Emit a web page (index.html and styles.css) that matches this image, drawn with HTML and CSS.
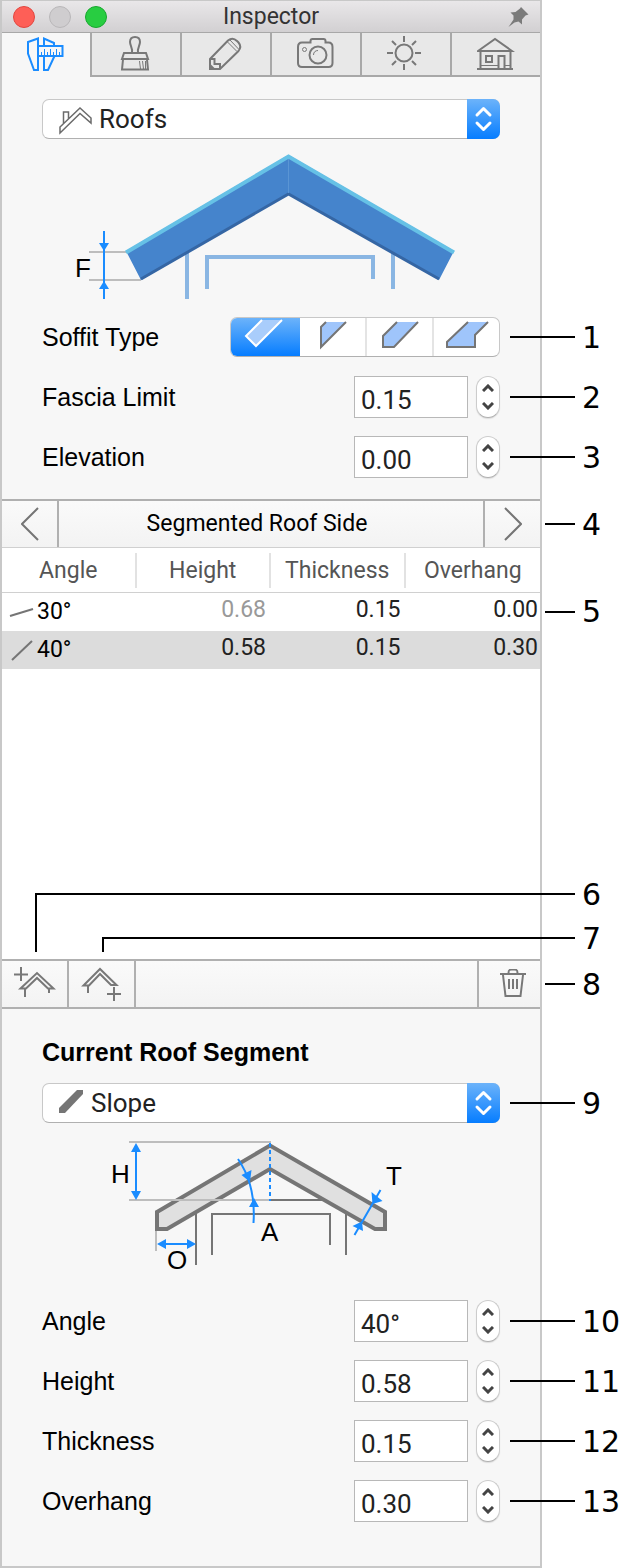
FILE: index.html
```html
<!DOCTYPE html>
<html lang="en">
<head>
  <meta charset="UTF-8">
  <meta name="viewport" content="width=device-width, initial-scale=1.0">
  <title>Inspector</title>
  <link rel="stylesheet" href="styles.css">
</head>
<body>
  <main class="inspector">
    <header class="titlebar">
      <div class="lights">
        <button class="light close" aria-label="Close"></button>
        <button class="light minimize" aria-label="Minimize"></button>
        <button class="light zoom" aria-label="Zoom"></button>
      </div>
      <h1>Inspector</h1>
      <button class="pin" aria-label="Pin">
        <svg width="22" height="22" viewBox="0 0 22 22"><path d="M14 1l7.500 7.500-3 1-3.500 4 0 5-3.500-3-4 1-6 4.500 5-7.500 0-4-3-3 5-.5 4.500-3.500z" fill="#7b7b7b"/></svg>
      </button>
    </header>

    <nav class="tabs">
      <button class="tab active" aria-label="Object properties">
        <svg width="38" height="38" viewBox="27 36 38 38">
          <path d="M38 38.500L28 42v11.500l6 16.500h4zM44 46v-7.500l10 4.500v3M54.500 56L48 70h-4V56M38 46h24.500v10H38"/>
          <path d="M41.500 52v4M44.500 49v7M47.500 52v4M50.500 49v7M53.500 52v4M56.500 49v7M59.500 52v4" stroke-width="1"/>
        </svg>
      </button>
      <button class="tab" aria-label="Materials">
        <svg width="38" height="38" viewBox="117 36 38 38">
          <path d="M132 53.500c1-4-2-7-2-10.500 0-3 2-5 5-5s5 2 5 5c0 3.500-3 6.500-2 10.500M124 54h22l2 6h-26zM123 60.500L122 70.500h26l-1-10"/>
          <path d="M139.500 62l1 8M142.500 62l1 8M145.500 62v8" stroke-width="1"/>
        </svg>
      </button>
      <button class="tab" aria-label="Edit">
        <svg width="38" height="38" viewBox="207 36 38 38">
          <path d="M210 60l18-18.500c3-2.500 6.500-2 9 .5l1.500 1.500c2.500 3 2 6 0 8.500L220 70h-10zM210 60h4.500v5h5.500v5"/>
          <path d="M227.500 43l9.500 9.500M230 41l9 9.500" stroke-width="1"/>
          <path d="M210 66l4 4h-4z" fill="#787878"/>
        </svg>
      </button>
      <button class="tab" aria-label="Camera">
        <svg width="38" height="38" viewBox="297 36 38 38">
          <path d="M302 43.500h8.500V42c0-1.500 1-2 2-2h11c1.500 0 2 .5 2 2v1.500h3c3 0 4 2 4 4.500v16c0 2.500-1.500 4-4 4h-26.500c-2.500 0-4-1.500-4-4V48c0-2.500 1.500-4.500 4-4.500z"/>
          <circle cx="318" cy="56" r="8.500"/>
          <circle cx="304.500" cy="50.500" r="2" stroke-width="1"/>
          <path d="M313.500 56c0-3 2-4.500 4.500-4.500" stroke-width="1"/>
        </svg>
      </button>
      <button class="tab" aria-label="Lighting">
        <svg width="38" height="38" viewBox="387 36 38 38">
          <circle cx="404" cy="54" r="8.500"/>
          <path d="M404 37v6M404 65v6M387 54h6M415 54h6M392 42l4 4M412 62l4 4M416 42l-4 4M396 62l-4 4"/>
        </svg>
      </button>
      <button class="tab" aria-label="Project">
        <svg width="38" height="38" viewBox="477 36 38 38">
          <path d="M478 52l17-12 17 12zM480.500 53v17M510.500 53v17M477 70h36M486 57h6v6h-6zM498.500 70V57h6v13"/>
          <path d="M481 66.500h17M505 66.500h5" stroke-width="1"/>
        </svg>
      </button>
    </nav>

    <section class="group">
      <div class="popup">
        <svg class="popup-icon" width="34" height="30" viewBox="58 106 34 30" fill="none" stroke="#6b6b6b" stroke-width="1.500">
          <path d="M60 134v-6l20-19 11 10v5l-11-9.500zM63.500 125v-12h5v7"/>
        </svg>
        <select class="roofs" aria-label="Object type"><option>Roofs</option></select>
        <svg class="arrows" width="33" height="40" viewBox="0 0 33 40"><path d="M10 16l6.500-6.500L23 16M10 24l6.500 6.500L23 24"/></svg>
      </div>

      <svg class="diagram" viewBox="42 139 458 168">
        <path d="M187 253v46M207 289v-32h166V279M393 253v36" fill="none" stroke="#8ab6e3" stroke-width="4"/>
        <path d="M89 252h38M89 280h52" stroke="#bdbdbd" stroke-width="2"/>
        <path d="M126 251L288.500 155 454 251l-15 29-150.500-86L141 280z" fill="#4584cc"/>
        <path d="M126 252.500L288.500 156.500 454 252.500" fill="none" stroke="#66c1e6" stroke-width="4"/>
        <path d="M141 279L288.500 194 439 279" fill="none" stroke="#3566a4" stroke-width="3"/>
        <path d="M288.500 159v34" stroke="#5a95d4"/>
        <path d="M104 231v68" stroke="#1a8cff" stroke-width="2"/>
        <path d="M99 243h10l-5 8zM99 289h10l-5-8z" fill="#1a8cff"/>
        <text x="75" y="277">F</text>
      </svg>

      <div class="row">
        <span class="label">Soffit Type</span>
        <div class="segmented">
          <label><input type="radio" name="soffit" aria-label="Perpendicular" checked>
            <svg width="44" height="34" viewBox="243 317 44 34"><path d="M261 319l-16 16 10 10 26-26z" fill="#a9cdfb"/><path d="M261 319l-16 16 10 10 26-26" fill="none" stroke="#fff" stroke-width="2"/></svg></label>
          <label><input type="radio" name="soffit" aria-label="Vertical">
            <svg width="44" height="34" viewBox="312 317 44 34"><path d="M327 321l-5 5v20l25-25z" fill="#9fc5fb"/><path d="M327 321l-5 5v20l25-25" fill="none" stroke="#757575" stroke-width="2"/></svg></label>
          <label><input type="radio" name="soffit" aria-label="Horizontal">
            <svg width="44" height="34" viewBox="379 317 44 34"><path d="M398 321l-14 14v11h11l24-25z" fill="#9fc5fb"/><path d="M398 321l-14 14v11h11l24-25" fill="none" stroke="#757575" stroke-width="2"/></svg></label>
          <label><input type="radio" name="soffit" aria-label="Boxed">
            <svg width="44" height="34" viewBox="446 317 44 34"><path d="M469 321l-21 20v5h28v-12l13-13z" fill="#9fc5fb"/><path d="M469 321l-21 20v5h28v-12l13-13" fill="none" stroke="#757575" stroke-width="2"/></svg></label>
        </div>
        <span class="callout">1</span>
      </div>
      <div class="row">
        <label class="label" for="fascia">Fascia Limit</label>
        <input type="text" id="fascia" value="0.15">
        <div class="stepper">
          <button aria-label="Increase"><svg width="12" height="8" viewBox="0 0 12 8"><path d="M1 7l5-5 5 5"/></svg></button>
          <button aria-label="Decrease"><svg width="12" height="8" viewBox="0 0 12 8"><path d="M1 1l5 5 5-5"/></svg></button>
        </div>
        <span class="callout">2</span>
      </div>
      <div class="row">
        <label class="label" for="elevation">Elevation</label>
        <input type="text" id="elevation" value="0.00">
        <div class="stepper">
          <button aria-label="Increase"><svg width="12" height="8" viewBox="0 0 12 8"><path d="M1 7l5-5 5 5"/></svg></button>
          <button aria-label="Decrease"><svg width="12" height="8" viewBox="0 0 12 8"><path d="M1 1l5 5 5-5"/></svg></button>
        </div>
        <span class="callout">3</span>
      </div>
    </section>

    <div class="side-nav">
      <button aria-label="Previous side"><svg width="18" height="34" viewBox="0 0 18 34"><path d="M17 1L1 17l16 16"/></svg></button>
      <h2>Segmented Roof Side</h2>
      <button aria-label="Next side"><svg width="18" height="34" viewBox="0 0 18 34"><path d="M1 1l16 16L1 33"/></svg></button>
      <span class="callout short">4</span>
    </div>

    <div class="segments">
      <table>
        <thead>
          <tr><th><span>Angle</span></th><th><span>Height</span></th><th><span>Thickness</span></th><th><span>Overhang</span></th></tr>
        </thead>
        <tbody>
          <tr>
            <td class="angle"><svg width="26" height="22" viewBox="0 0 26 22"><path d="M1 15l23-7"/></svg>30°</td>
            <td class="dim">0.68</td>
            <td>0.15</td>
            <td>0.00<span class="callout short">5</span></td>
          </tr>
          <tr class="selected">
            <td class="angle"><svg width="26" height="22" viewBox="0 0 26 22"><path d="M3 21L23 2"/></svg>40°</td>
            <td>0.58</td>
            <td>0.15</td>
            <td>0.30</td>
          </tr>
        </tbody>
      </table>
      <span class="lead lead-upper">6</span>
      <span class="lead lead-lower">7</span>
    </div>

    <div class="toolbar">
      <button aria-label="Add segment above">
        <svg width="42" height="34" viewBox="14 967 42 34"><path d="M14 974.500h14M21 967v14M20.500 988.500L37 973l16.500 15.500h-5.500L37 978l-11 10.500zM25 989v8M49 989v4"/></svg>
      </button>
      <button aria-label="Add segment below">
        <svg width="42" height="34" viewBox="82 969 42 34"><path d="M84.500 987.500L101 971l16.500 16h-5.500L101 976l-11 11.500zM89 988v7M108 996h14M115 989v14"/></svg>
      </button>
      <button class="delete" aria-label="Delete segment">
        <svg width="32" height="30" viewBox="493 969 32 30"><path d="M499 974h26M507.500 973c0-3 1-3.500 3-3.500h3c2 0 3 .5 3 3.500M502 975l2.500 21h15l2.500-21M508 979v10M512 979v10M516 979v10"/></svg>
      </button>
      <span class="callout short">8</span>
    </div>

    <section class="group current">
      <h2>Current Roof Segment</h2>
      <div class="popup">
        <svg class="popup-icon" width="26" height="30" viewBox="58 1090 26 30"><path d="M59 1109l18-18h6v4l-18 19h-6z" fill="#757575"/></svg>
        <select class="slope" aria-label="Segment type"><option>Slope</option></select>
        <svg class="arrows" width="33" height="40" viewBox="0 0 33 40"><path d="M10 16l6.500-6.500L23 16M10 24l6.500 6.500L23 24"/></svg>
        <span class="callout">9</span>
      </div>

      <svg class="diagram" viewBox="42 1123 458 168">
        <path d="M196 1213v52M212 1255v-41h118v31M346 1213v42M270 1200h54" fill="none" stroke="#757575" stroke-width="2"/>
        <path d="M157 1212L270 1145.500 385 1212v17h-10L270 1169l-103 60h-10z" fill="#e0e0e0" stroke="#757575" stroke-width="4"/>
        <path d="M129 1142h142M129 1200h141M156 1231v20" stroke="#bdbdbd" stroke-width="2"/>
        <path d="M136 1146v50M160 1244h32M380.500 1190l-26 45M238 1159q18 26 15.500 64" fill="none" stroke="#1a8cff" stroke-width="2"/>
        <path d="M270 1143v58" stroke="#1a8cff" stroke-width="2" stroke-dasharray="4 3"/>
        <path d="M131 1152h10l-5-9zM131 1191h10l-5 9zM166 1239v10l-9-5zM187 1239v10l9-5zM241.500 1175l10-5-1.500 12zM249 1207h10l-5-9zM371.500 1192l11 9-10 3zM352.500 1226l9.500-4.500 1 9.500z" fill="#1a8cff"/>
        <text x="111" y="1183">H</text>
        <text x="386" y="1185">T</text>
        <text x="261" y="1241">A</text>
        <text x="167" y="1269">O</text>
      </svg>

      <div class="row">
        <label class="label" for="angle">Angle</label>
        <input type="text" id="angle" value="40°">
        <div class="stepper">
          <button aria-label="Increase"><svg width="12" height="8" viewBox="0 0 12 8"><path d="M1 7l5-5 5 5"/></svg></button>
          <button aria-label="Decrease"><svg width="12" height="8" viewBox="0 0 12 8"><path d="M1 1l5 5 5-5"/></svg></button>
        </div>
        <span class="callout">10</span>
      </div>
      <div class="row">
        <label class="label" for="height">Height</label>
        <input type="text" id="height" value="0.58">
        <div class="stepper">
          <button aria-label="Increase"><svg width="12" height="8" viewBox="0 0 12 8"><path d="M1 7l5-5 5 5"/></svg></button>
          <button aria-label="Decrease"><svg width="12" height="8" viewBox="0 0 12 8"><path d="M1 1l5 5 5-5"/></svg></button>
        </div>
        <span class="callout">11</span>
      </div>
      <div class="row">
        <label class="label" for="thickness">Thickness</label>
        <input type="text" id="thickness" value="0.15">
        <div class="stepper">
          <button aria-label="Increase"><svg width="12" height="8" viewBox="0 0 12 8"><path d="M1 7l5-5 5 5"/></svg></button>
          <button aria-label="Decrease"><svg width="12" height="8" viewBox="0 0 12 8"><path d="M1 1l5 5 5-5"/></svg></button>
        </div>
        <span class="callout">12</span>
      </div>
      <div class="row">
        <label class="label" for="overhang">Overhang</label>
        <input type="text" id="overhang" value="0.30">
        <div class="stepper">
          <button aria-label="Increase"><svg width="12" height="8" viewBox="0 0 12 8"><path d="M1 7l5-5 5 5"/></svg></button>
          <button aria-label="Decrease"><svg width="12" height="8" viewBox="0 0 12 8"><path d="M1 1l5 5 5-5"/></svg></button>
        </div>
        <span class="callout">13</span>
      </div>
    </section>
  </main>
</body>
</html>
```
FILE: styles.css
```css
* {
  box-sizing: border-box;
}
body {
  margin: 0;
  padding-right: 78px;
  background: #fff;
  color: #000;
  font-family: Roboto, sans-serif;
  font-size: 23px;
  overflow-x: hidden;
}
h1, h2 {
  margin: 0;
}
button {
  padding: 0;
  border: none;
  background: none;
  font: inherit;
}
svg {
  display: block;
}
.inspector {
  border: 2px solid #c8c8c8;
  border-top-width: 1px;
  background: #f7f7f7;
}

/* title bar */
.titlebar {
  display: grid;
  grid-template-columns: 1fr auto 1fr;
  align-items: center;
  height: 32px;
  padding: 0 11px;
  border-bottom: 1px solid #a8a8a8;
  background: linear-gradient(#e9e7e9, #d2d0d2);
}
.titlebar h1 {
  font-size: 23px;
  font-weight: 400;
  line-height: 30px;
  color: #333;
}
.lights {
  display: flex;
  gap: 14px;
}
.light {
  width: 22px;
  height: 22px;
  border: 1px solid #b9b7b9;
  border-radius: 50%;
  background: #cfcdcf;
}
.close {
  border-color: #e2463f;
  background: #fe5f57;
}
.zoom {
  border-color: #17a82e;
  background: #28cd41;
}
.pin {
  justify-self: end;
}

/* tabs */
.tabs {
  display: flex;
  height: 44px;
}
.tab {
  flex: 1;
  display: flex;
  align-items: center;
  justify-content: center;
  border-right: 2px solid #a8a8a8;
  border-bottom: 2px solid #a8a8a8;
  background: #e8e8e8;
}
.tab:last-child {
  border-right: none;
}
.tab.active {
  border-bottom: none;
  background: #f7f7f7;
}
.tab svg {
  fill: none;
  stroke: #787878;
  stroke-width: 2;
}
.tab.active svg {
  stroke: #1a8cff;
}

/* form groups */
.group {
  padding: 22px 40px 12px;
}
.current {
  padding: 28px 40px 35px;
}
.current h2 {
  margin-bottom: 16px;
  font-family: "Liberation Sans", Arial, sans-serif;
  font-size: 25px;
  line-height: 30px;
}
.popup {
  position: relative;
}
.popup select {
  appearance: none;
  display: block;
  width: 100%;
  height: 40px;
  border: 1px solid #c8c8c8;
  border-bottom-color: #b0b0b0;
  border-radius: 7px;
  background: #fff;
  color: #222;
  font-family: inherit;
  font-size: 26px;
}
.popup .roofs {
  padding-left: 56px;
}
.popup .slope {
  padding-left: 48px;
}
.popup-icon {
  position: absolute;
  left: 16px;
  top: 6px;
}
.arrows {
  position: absolute;
  right: 0;
  top: 0;
  border-radius: 0 7px 7px 0;
  background: linear-gradient(#6cb3fa, #067dff);
  fill: none;
  stroke: #fff;
  stroke-width: 3;
  stroke-linecap: round;
  stroke-linejoin: round;
  pointer-events: none;
}
.diagram {
  width: 100%;
}
.diagram text {
  font-family: "Liberation Sans", Arial, sans-serif;
  font-size: 26px;
}
.row {
  position: relative;
  display: flex;
  align-items: center;
  height: 60px;
}
.label {
  margin-right: auto;
  font-family: "Liberation Sans", Arial, sans-serif;
  font-size: 25px;
}
.row input[type="text"] {
  width: 114px;
  height: 42px;
  margin-right: 8px;
  padding: 6px 6px 0;
  border: 1px solid #b8b8b8;
  background: #fff;
  color: #222;
  font-family: inherit;
  font-size: 26px;
}
.stepper {
  display: flex;
  flex-direction: column;
  width: 24px;
  height: 42px;
  padding: 2px 0;
  border: 1px solid #ccc;
  border-bottom-color: #b0b0b0;
  border-radius: 12px;
  background: #fff;
  box-shadow: 0 1px 1px #ddd;
}
.stepper button {
  flex: 1;
  display: flex;
  align-items: center;
  justify-content: center;
}
.stepper svg {
  fill: none;
  stroke: #444;
  stroke-width: 3;
}
.segmented {
  display: flex;
  width: 270px;
  height: 40px;
  border: 1px solid #c8c8c8;
  border-bottom-color: #b0b0b0;
  border-radius: 7px;
  background: #fff;
  overflow: hidden;
}
.segmented label {
  position: relative;
  flex: 1;
  display: flex;
  justify-content: center;
  border-left: 2px solid #e4e4e4;
}
.segmented label:first-child,
.segmented label:nth-child(2) {
  border-left: none;
}
.segmented label:has(:checked) {
  flex: 0 0 69px;
  background: linear-gradient(#6cb3fa, #067dff);
}
.segmented input {
  position: absolute;
  opacity: 0;
}

/* roof side switcher */
.side-nav {
  position: relative;
  display: flex;
  height: 49px;
  border-top: 2px solid #b0b0b0;
  border-bottom: 1px solid #d0d0d0;
  background: linear-gradient(#fafafa, #f3f3f3);
}
.side-nav h2 {
  flex: 1;
  padding-right: 28px;
  border: solid #b0b0b0;
  border-width: 0 2px;
  font-size: 23px;
  font-weight: 400;
  line-height: 46px;
  text-align: center;
}
.side-nav button {
  display: flex;
  align-items: center;
  justify-content: center;
  width: 55px;
}
.side-nav svg {
  fill: none;
  stroke: #757575;
  stroke-width: 2;
}

/* segment list */
.segments {
  position: relative;
  min-height: 411px;
  background: #fff;
}
table {
  width: 100%;
  border-spacing: 0;
  table-layout: fixed;
}
th {
  height: 45px;
  padding: 0;
  border-bottom: 1px solid #d0d0d0;
  color: #555;
  font-weight: 400;
}
th span {
  display: block;
  border-right: 2px solid #e2e2e2;
  line-height: 35px;
}
th:last-child span {
  border-right: none;
}
td {
  position: relative;
  height: 38px;
  padding: 0 5px 4px 0;
  color: #222;
  line-height: 34px;
  text-align: right;
}
td:last-child {
  padding-right: 2px;
}
td.angle {
  display: flex;
  align-items: center;
  gap: 2px;
  padding: 0 0 0 7px;
  color: #000;
}
td.dim {
  color: #999;
}
.angle svg {
  fill: none;
  stroke: #757575;
  stroke-width: 2;
}
.selected {
  background: #dcdcdc;
}

/* list toolbar */
.toolbar {
  position: relative;
  display: flex;
  height: 50px;
  border: solid #b0b0b0;
  border-width: 2px 0;
  background: linear-gradient(#fafafa, #f3f3f3);
}
.toolbar button {
  display: flex;
  align-items: center;
  justify-content: center;
  width: 67px;
  border-right: 2px solid #b0b0b0;
}
.toolbar .delete {
  width: 63px;
  margin-left: auto;
  border-right: none;
  border-left: 2px solid #b0b0b0;
}
.toolbar svg {
  fill: none;
  stroke: #787878;
  stroke-width: 2;
}

/* numbered callouts outside the window */
.callout {
  position: absolute;
  left: calc(100% + 10px);
  top: 0;
  bottom: 0;
  display: flex;
  align-items: center;
  gap: 7px;
  color: #000;
  font-family: "DejaVu Sans", Verdana, sans-serif;
  font-size: 30px;
}
.callout::before {
  content: "";
  width: 65px;
  height: 2px;
  background: #000;
}
.callout.short {
  left: calc(100% + 5px);
}
.callout.short::before {
  width: 30px;
}
.lead {
  position: absolute;
  right: -35px;
  border: solid #000;
  border-width: 2px 0 0 2px;
  font-family: "DejaVu Sans", Verdana, sans-serif;
  font-size: 30px;
  line-height: 0;
  text-indent: calc(100% + 7px);
  white-space: nowrap;
}
.lead-upper {
  left: 33px;
  bottom: 7px;
  height: 59px;
}
.lead-lower {
  left: 100px;
  bottom: 7px;
  height: 15px;
}
```
